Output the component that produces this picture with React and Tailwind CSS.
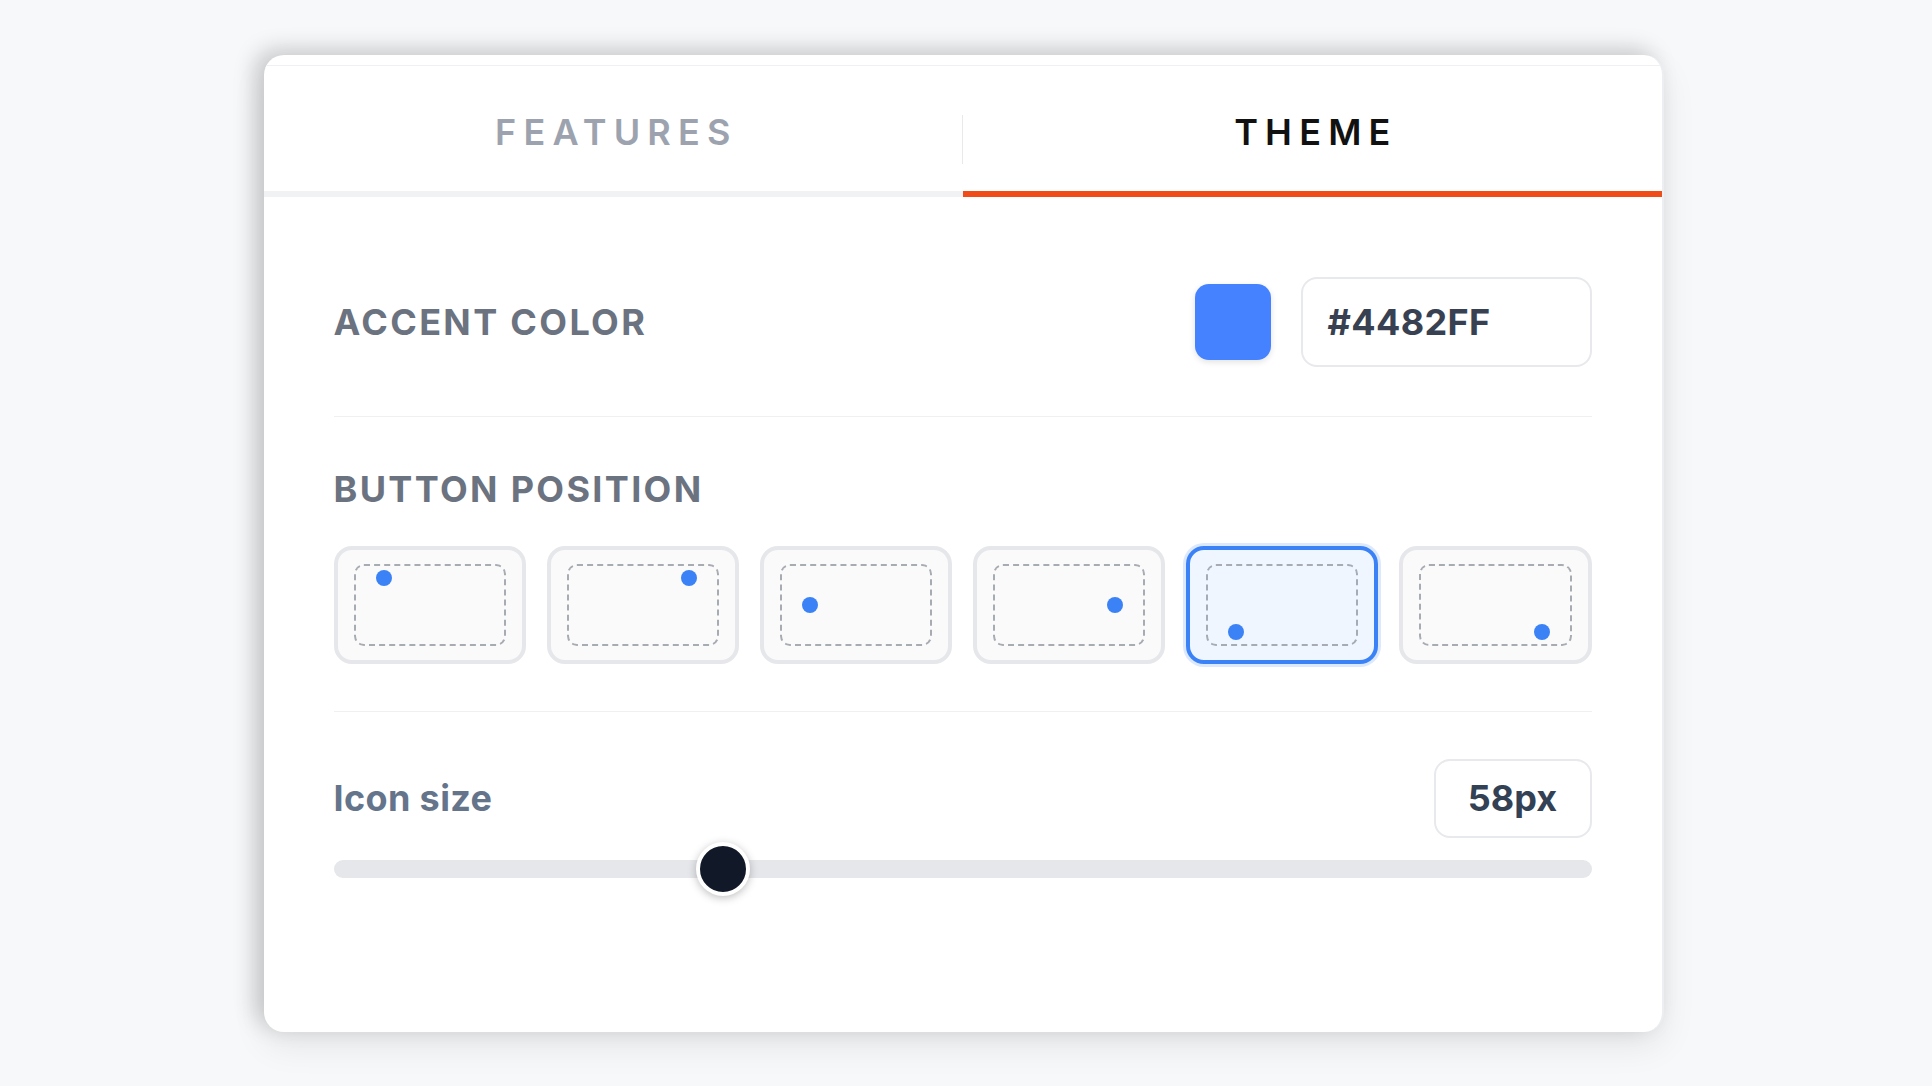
import React from "react";

const positions = [
  { key: "tl", dot: "top-[4px] left-[20px]" },
  { key: "tr", dot: "top-[4px] right-[20px]" },
  { key: "ml", dot: "top-1/2 -translate-y-1/2 left-[20px]" },
  { key: "mr", dot: "top-1/2 -translate-y-1/2 right-[20px]" },
  { key: "bl", dot: "bottom-[4px] left-[20px]" },
  { key: "br", dot: "bottom-[4px] right-[20px]" },
];

function PositionBox({ dot, selected }) {
  return (
    <button
      type="button"
      className={
        selected
          ? "h-[118px] rounded-[18px] border-[4px] border-[#3b82f6] bg-[#eff6ff] px-[16px] py-[14px] flex shadow-[0_0_0_3px_rgba(59,130,246,0.18)]"
          : "h-[118px] rounded-[18px] border-[4px] border-[#e6e7ea] bg-[#fafafa] px-[16px] py-[14px] flex"
      }
    >
      <div className="relative flex-1 rounded-[10px] border-2 border-dashed border-[#a7abb2]">
        <span className={"absolute w-[16px] h-[16px] rounded-full bg-[#3b82f6] " + dot} />
      </div>
    </button>
  );
}

export default function App() {
  return (
    <div
      className="min-h-screen w-full bg-[#f7f8fa] flex items-center justify-center pr-[5px]"
      style={{ fontFamily: "Inter, 'Liberation Sans', sans-serif" }}
    >
      <div className="w-[1400px] h-[977px] bg-white rounded-[20px] overflow-hidden flex flex-col border-r-2 border-[#eceef1] shadow-[-9px_-6px_22px_rgba(0,0,0,0.18),0_14px_34px_rgba(0,0,0,0.08)]">
        <div className="h-[11px] shrink-0 border-b border-[#eef0f3]" />
        {/* Tabs */}
        <div className="flex shrink-0">
          <div className="flex-1 flex flex-col">
            <div className="h-[125px] flex items-center justify-center pt-[8px]">
              <span className="text-[36px] font-semibold tracking-[0.2em] pl-[0.2em] text-[#9ca3af] leading-none">
                FEATURES
              </span>
            </div>
            <div className="h-[6px] bg-[#f1f2f4]" />
          </div>
          <div className="w-px flex flex-col">
            <div className="h-[125px] pt-[49px]">
              <div className="w-px h-[49px] bg-[#e8e9ec]" />
            </div>
            <div className="h-[6px] bg-[#f1f2f4]" />
          </div>
          <div className="flex-1 flex flex-col">
            <div className="h-[125px] flex items-center justify-center pt-[8px]">
              <span className="text-[36px] font-semibold tracking-[0.2em] pl-[0.2em] text-[#111111] leading-none">
                THEME
              </span>
            </div>
            <div className="h-[6px] bg-[#f04c17]" />
          </div>
        </div>

        {/* Content */}
        <div className="px-[70px] pt-[80px] flex flex-col">
          {/* Accent color */}
          <div className="h-[90px] flex items-center justify-between">
            <span className="text-[36px] font-bold tracking-[0.065em] text-[#6b7280] leading-[44px]">
              ACCENT COLOR
            </span>
            <div className="flex items-center gap-[30px]">
              <div className="w-[76px] h-[76px] rounded-[14px] bg-[#4482FF] shadow-[0_2px_6px_rgba(0,0,0,0.12)]" />
              <div className="w-[291px] h-[90px] rounded-[16px] border-2 border-[#e8e9ec] flex items-center pl-[25px]">
                <span className="text-[36px] font-bold text-[#374151] leading-none tracking-[0.01em]">#4482FF</span>
              </div>
            </div>
          </div>

          <div className="mt-[49px] h-px bg-[#eef0f2]" />

          {/* Button position */}
          <div className="mt-[50px] text-[36px] font-bold tracking-[0.065em] text-[#6b7280] leading-[44px]">
            BUTTON POSITION
          </div>
          <div className="mt-[35px] grid grid-cols-6 gap-[21px]">
            {positions.map((p) => (
              <PositionBox key={p.key} dot={p.dot} selected={p.key === "bl"} />
            ))}
          </div>

          <div className="mt-[47px] h-px bg-[#eef0f2]" />

          {/* Icon size */}
          <div className="mt-[47px] flex items-center justify-between">
            <span className="text-[36px] font-bold text-[#64748b] leading-[44px] tracking-[0.01em]">Icon size</span>
            <div className="w-[158px] h-[79px] rounded-[16px] border-2 border-[#e8e9ec] flex items-center justify-center">
              <span className="text-[36px] font-bold text-[#334155] leading-none">58px</span>
            </div>
          </div>
          <div className="mt-[22px] relative h-[18px] rounded-full bg-[#e5e7eb]">
            <div className="absolute left-[362px] top-[-18px] w-[54px] h-[54px] rounded-full bg-[#111827] border-[4px] border-white shadow-[0_2px_8px_rgba(0,0,0,0.25)]" />
          </div>
        </div>
      </div>
    </div>
  );
}
